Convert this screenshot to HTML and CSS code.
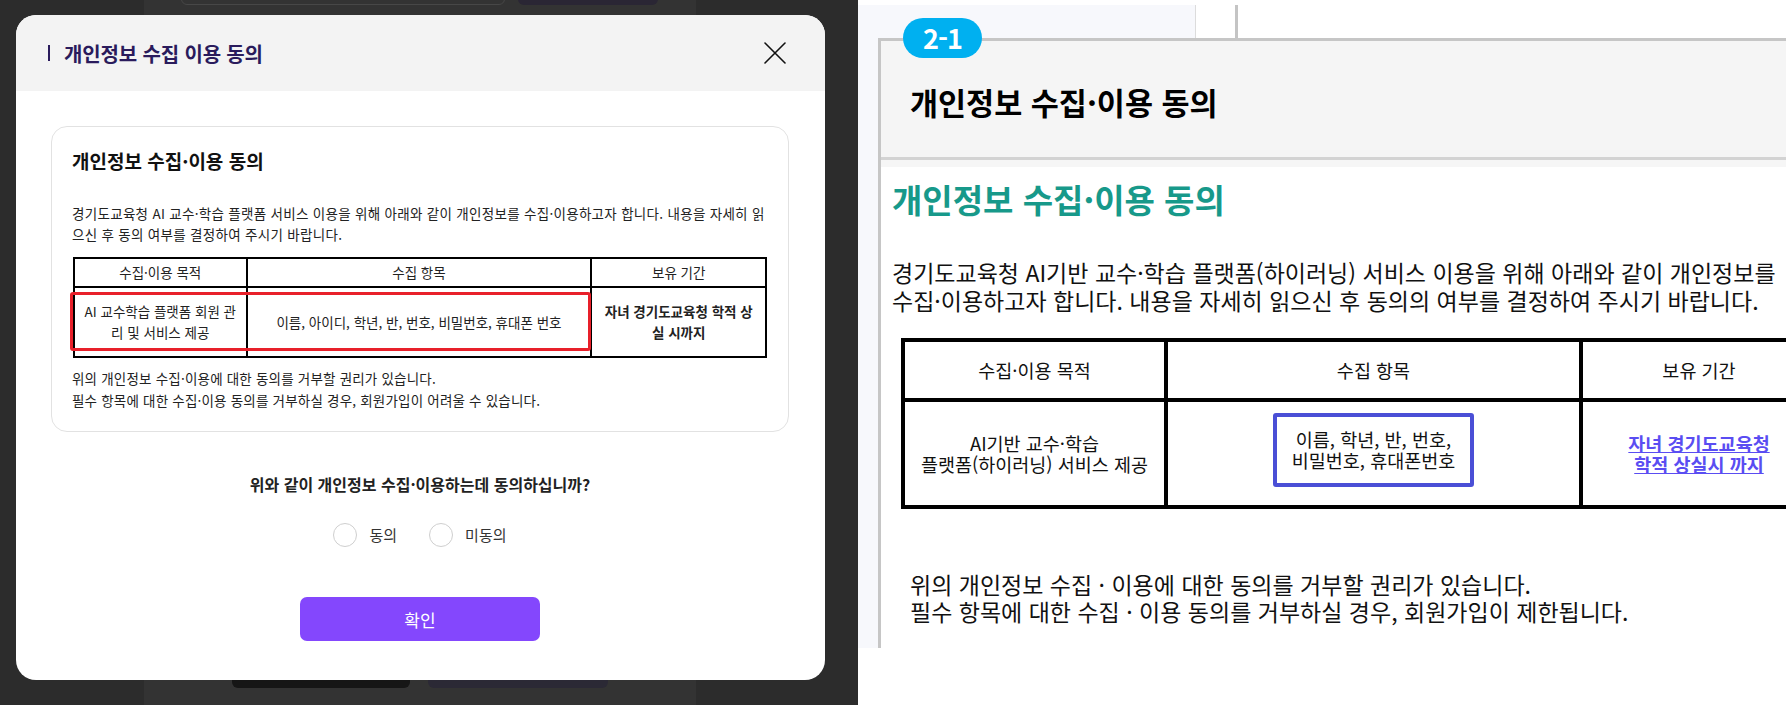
FILE: index.html
```html
<!DOCTYPE html>
<html lang="ko">
<head>
<meta charset="utf-8">
<title>개인정보 수집 이용 동의</title>
<link rel="stylesheet" href="styles.css">
</head>
<body>
<div class="screen">

  <section class="stage">
    <div class="backdrop-page">
      <div class="bp-row bp-row-top">
        <span class="bp-btn bp-btn-outline"></span>
        <span class="bp-btn bp-btn-violet"></span>
      </div>
      <div class="bp-row bp-row-bottom">
        <span class="bp-btn bp-btn-black"></span>
        <span class="bp-btn bp-btn-violet"></span>
      </div>
    </div>

    <div class="modal" role="dialog" aria-labelledby="modal-title">
      <header class="modal-head">
        <h2 class="modal-title" id="modal-title">개인정보 수집 이용 동의</h2>
        <button class="modal-close" type="button" aria-label="닫기">
          <svg viewBox="0 0 22 22" width="22" height="22" aria-hidden="true">
            <path d="M1 1 L21 21 M21 1 L1 21" stroke="#111" stroke-width="1.6" fill="none" stroke-linecap="round"/>
          </svg>
        </button>
      </header>

      <div class="modal-body">
        <div class="terms-card">
          <h3 class="terms-title">개인정보 수집·이용 동의</h3>
          <p class="terms-text">경기도교육청 AI 교수·학습 플랫폼 서비스 이용을 위해 아래와 같이 개인정보를 수집·이용하고자 합니다. 내용을 자세히 읽<br>으신 후 동의 여부를 결정하여 주시기 바랍니다.</p>

          <div class="terms-table-wrap">
            <table class="terms-table">
              <colgroup>
                <col class="c1"><col class="c2"><col class="c3">
              </colgroup>
              <tr class="head-row">
                <td>수집·이용 목적</td>
                <td>수집 항목</td>
                <td>보유 기간</td>
              </tr>
              <tr class="body-row">
                <td>AI 교수학습 플랫폼 회원 관리 및 서비스 제공</td>
                <td>이름, 아이디, 학년, 반, 번호, 비밀번호, 휴대폰 번호</td>
                <td class="strong">자녀 경기도교육청 학적 상실 시까지</td>
              </tr>
            </table>
            <span class="mark-red"></span>
          </div>

          <p class="terms-note">위의 개인정보 수집·이용에 대한 동의를 거부할 권리가 있습니다.<br>필수 항목에 대한 수집·이용 동의를 거부하실 경우, 회원가입이 어려울 수 있습니다.</p>
        </div>

        <p class="question">위와 같이 개인정보 수집·이용하는데 동의하십니까?</p>

        <div class="choices">
          <label class="choice"><span class="radio"></span>동의</label>
          <label class="choice"><span class="radio"></span>미동의</label>
        </div>

        <button class="confirm" type="button">확인</button>
      </div>
    </div>
  </section>

  <section class="spec">
    <div class="spec-sheet">
      <div class="spec-rail"></div>
      <div class="spec-rule"></div>

      <div class="doc-box">
        <span class="doc-badge">2-1</span>
        <div class="doc-head">
          <h2 class="doc-head-title">개인정보 수집·이용 동의</h2>
        </div>
        <div class="doc-body">
          <h3 class="doc-title">개인정보 수집·이용 동의</h3>
          <p class="doc-text">경기도교육청 AI기반 교수·학습 플랫폼(하이러닝) 서비스 이용을 위해 아래와 같이 개인정보를<br>수집·이용하고자 합니다. 내용을 자세히 읽으신 후 동의의 여부를 결정하여 주시기 바랍니다.</p>

          <table class="doc-table">
            <colgroup>
              <col class="d1"><col class="d2"><col class="d3">
            </colgroup>
            <tr class="doc-head-row">
              <td>수집·이용 목적</td>
              <td>수집 항목</td>
              <td>보유 기간</td>
            </tr>
            <tr class="doc-body-row">
              <td>AI기반 교수·학습<br>플랫폼(하이러닝) 서비스 제공</td>
              <td class="items-cell"><span class="mark-blue">이름, 학년, 반, 번호,<br>비밀번호, 휴대폰번호</span></td>
              <td><a class="doc-link" href="#">자녀 경기도교육청<br>학적 상실시 까지</a></td>
            </tr>
          </table>

          <p class="doc-note">위의 개인정보 수집 · 이용에 대한 동의를 거부할 권리가 있습니다.<br>필수 항목에 대한 수집 · 이용 동의를 거부하실 경우, 회원가입이 제한됩니다.</p>
        </div>
      </div>
    </div>
  </section>

</div>
</body>
</html>
```

FILE: styles.css
```css
* {
  box-sizing: border-box;
}

html,
body {
  margin: 0;
  padding: 0;
}

body {
  width: 1786px;
  height: 705px;
  overflow: hidden;
  font-family: "Noto Sans CJK KR", "Noto Sans", sans-serif;
  color: #111;
  background: #fff;
}

.screen {
  display: flex;
  height: 705px;
}

/* ---------- left: dimmed page with the consent dialog ---------- */

.stage {
  position: relative;
  flex: 0 0 858px;
  height: 705px;
  background: #2c2c2c;
}

.backdrop-page {
  margin-left: 144px;
  width: 552px;
  height: 705px;
  background: #333333;
  display: flex;
  flex-direction: column;
  justify-content: space-between;
}

.bp-row {
  display: flex;
  overflow: hidden;
}

.bp-row-top {
  height: 5px;
  align-items: flex-end;
  padding-left: 37px;
  gap: 13px;
}

/* buttons of the page underneath, only their lower edge shows below the dialog */
.bp-row-bottom {
  height: 30px;
  margin-bottom: 17px;
  align-items: flex-end;
  padding-left: 88px;
  gap: 18px;
}

.bp-btn {
  display: block;
  height: 44px;
  border-radius: 6px;
}

.bp-btn-outline {
  width: 324px;
  border: 1px solid #474747;
}

.bp-row-top .bp-btn-violet {
  width: 140px;
  background: #2a2634;
}

.bp-btn-black {
  width: 178px;
  background: #161616;
}

.bp-row-bottom .bp-btn-violet {
  width: 180px;
  background: #2b2935;
}

.modal {
  position: absolute;
  left: 16px;
  top: 15px;
  width: 809px;
  height: 665px;
  background: #fff;
  border-radius: 20px;
  overflow: hidden;
}

.modal-head {
  height: 76px;
  background: #f3f3f3;
  display: flex;
  align-items: center;
  justify-content: space-between;
  padding: 0 39px 0 32px;
}

.modal-title {
  margin: 0;
  display: flex;
  align-items: center;
  gap: 14px;
  font-size: 20px;
  font-weight: 700;
  color: #2a1b5c;
  letter-spacing: -0.15px;
}

.modal-title::before {
  content: "";
  width: 2px;
  height: 16px;
  background: #2a1b5c;
}

.modal-close {
  width: 22px;
  height: 22px;
  padding: 0;
  border: 0;
  background: none;
  display: flex;
}

.modal-body {
  padding: 35px 36px 0 35px;
  display: flex;
  flex-direction: column;
  align-items: center;
}

.terms-card {
  width: 738px;
  border: 1px solid #e2e2e2;
  border-radius: 16px;
  padding: 20px 20px 20px 20px;
  color: #222;
}

.terms-title {
  margin: 0;
  font-size: 19px;
  line-height: 28px;
  font-weight: 700;
  color: #111;
}

.terms-text {
  margin: 28px 0 0;
  font-size: 13.5px;
  line-height: 21px;
  letter-spacing: 0.3px;
}

.terms-table-wrap {
  position: relative;
  margin-top: 12px;
}

.terms-table {
  width: 694px;
  margin-left: 1px;
  border-collapse: collapse;
  border: 2px solid #000;
  font-size: 13.5px;
  line-height: 21px;
  text-align: center;
}

.terms-table td {
  border: 2px solid #000;
  padding: 0 8px;
}

.terms-table td.strong {
  padding: 0 11px;
  font-weight: 700;
}

.terms-table .c1 { width: 173px; }
.terms-table .c2 { width: 346px; }
.terms-table .c3 { width: 175px; }

.head-row { height: 29px; }
.body-row { height: 70px; }

/* highlight drawn over the first two cells of the data row */
.mark-red {
  position: absolute;
  left: -2px;
  top: 35px;
  width: 521px;
  height: 59px;
  border: 3.5px solid #e8202a;
  border-radius: 3px;
}

.terms-note {
  margin: 10px 0 0;
  font-size: 13.5px;
  line-height: 21.5px;
  letter-spacing: 0.2px;
}

.question {
  margin: 40px 0 0;
  font-size: 16px;
  line-height: 24px;
  font-weight: 700;
  color: #222;
}

.choices {
  margin-top: 27px;
  display: flex;
  gap: 32px;
}

.choice {
  display: flex;
  align-items: center;
  gap: 12px;
  font-size: 15px;
  line-height: 24px;
  color: #333;
}

.radio {
  width: 24px;
  height: 24px;
  border: 1px solid #cfcfcf;
  border-radius: 50%;
  background: #fff;
}

.confirm {
  margin-top: 50px;
  width: 240px;
  height: 44px;
  border: 0;
  border-radius: 7px;
  background: #8447fd;
  color: #fff;
  font-family: inherit;
  font-size: 17px;
}

/* ---------- right: storyboard page ---------- */

.spec {
  flex: 1 1 auto;
  height: 705px;
  background: #fff;
  overflow: hidden;
}

.spec-sheet {
  height: 648px;
  display: grid;
  grid-template-columns: 1fr;
  grid-template-rows: 1fr;
  overflow: hidden;
}

.spec-rail,
.spec-rule,
.doc-box {
  grid-area: 1 / 1;
}

.spec-rail {
  width: 338px;
  margin-top: 5px;
  background: #f7f8fc;
  border-right: 1px solid #dcdcdc;
}

.spec-rule {
  align-self: start;
  margin: 5px 0 0 377px;
  width: 3px;
  height: 33px;
  background: #c4c4c4;
}

.doc-box {
  position: relative;
  margin: 38px 0 0 20px;
  width: 1000px;
  border-left: 3px solid #c6c6c6;
  border-top: 3px solid #c6c6c6;
  background: #fff;
}

.doc-badge {
  position: absolute;
  left: 22px;
  top: -23px;
  width: 79px;
  height: 40px;
  border-radius: 20px;
  background: #00b0f0;
  color: #fff;
  font-size: 27px;
  font-weight: 700;
  line-height: 40px;
  text-align: center;
  letter-spacing: -1px;
}

.doc-head {
  height: 119px;
  background: #f5f5f5;
  border-bottom: 3px solid #d3d3d3;
  display: flex;
  align-items: center;
  padding: 6px 0 0 29px;
}

.doc-head-title {
  margin: 0;
  font-size: 30.5px;
  font-weight: 700;
  color: #000;
}

.doc-body {
  border-top: 7px solid #f6f6f6;
  padding-left: 11px;
  white-space: nowrap;
}

.doc-title {
  margin: 12px 0 0;
  font-size: 33px;
  line-height: 40px;
  font-weight: 700;
  color: #17998a;
}

.doc-text {
  margin: 39px 0 0;
  font-size: 23px;
  line-height: 28px;
  color: #111;
}

.doc-table {
  margin: 24px 0 0 9px;
  border-collapse: collapse;
  border: 4px solid #000;
  font-size: 18.5px;
  line-height: 21px;
  text-align: center;
}

.doc-table td {
  border: 4px solid #000;
  padding: 0;
}

.doc-table td.items-cell {
  padding-bottom: 7px;
}

.doc-table .d1 { width: 263px; }
.doc-table .d2 { width: 415px; }
.doc-table .d3 { width: 236px; }

.doc-head-row { height: 60px; }
.doc-body-row { height: 107px; }

.mark-blue {
  display: inline-block;
  padding: 12px 15px;
  border: 4px solid #4a4fd6;
  border-radius: 3px;
}

.doc-link {
  color: #5a4df2;
  font-weight: 700;
  text-decoration: underline;
}

.doc-note {
  margin: 62px 0 0 18px;
  font-size: 23px;
  line-height: 27px;
  color: #111;
}
```
